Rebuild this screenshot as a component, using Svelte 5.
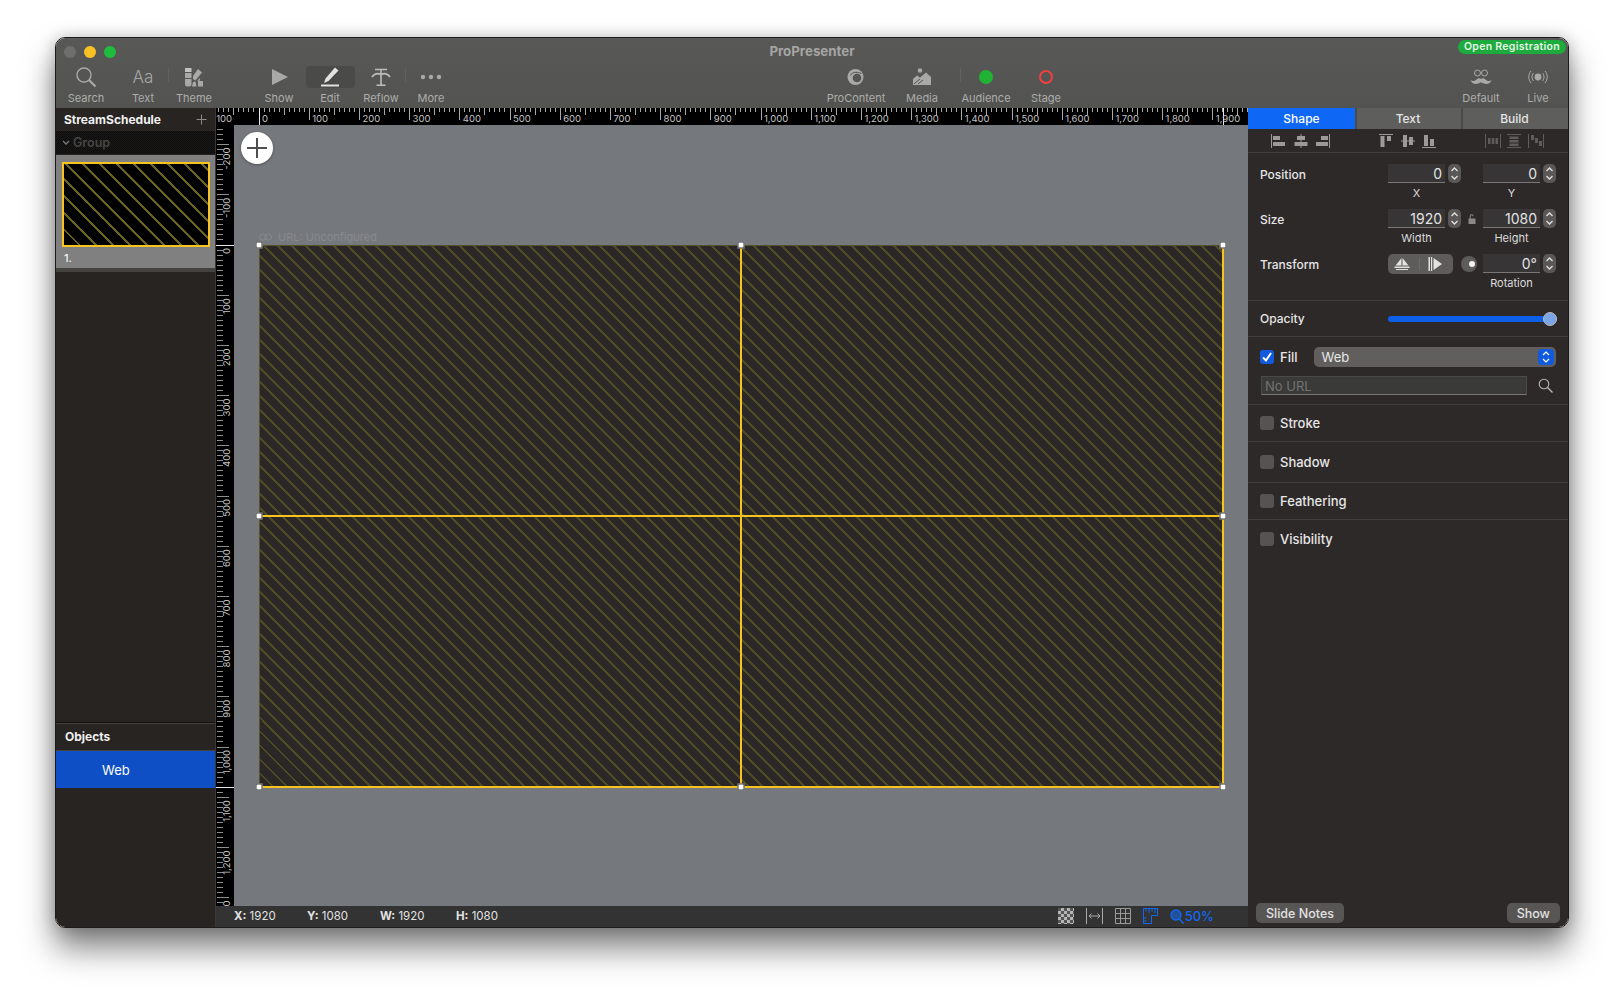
<script>
	// toolbar items, `ml` is the extra room before an item
	const toolsLeft = [
		{ id: 'search', label: 'Search' },
		{ id: 'aa', label: 'Text', ml: 7 },
		{ id: 'theme', label: 'Theme', ml: 1, sep: true },
		{ id: 'show', label: 'Show', ml: 35 },
		{ id: 'edit', label: 'Edit', ml: 1, active: true },
		{ id: 'reflow', label: 'Reflow', ml: 1 },
		{ id: 'more', label: 'More', sep: true }
	];
	const toolsMid = [
		{ id: 'procontent', label: 'ProContent' },
		{ id: 'media', label: 'Media', ml: 16 },
		{ id: 'audience', label: 'Audience', ml: 14, sep: true },
		{ id: 'stage', label: 'Stage', ml: 10 }
	];
	const toolsRight = [
		{ id: 'default', label: 'Default' },
		{ id: 'live', label: 'Live', ml: 7 }
	];

	const SCALE = 0.502;
	const TOP_ZERO = 43;
	const LEFT_ZERO = 120;

	function range(from, to, step) {
		const out = [];
		for (let v = from; v <= to; v += step) out.push(v);
		return out;
	}

	const topTicks = range(-100, 2000, 10);
	const leftTicks = range(-240, 1310, 10);
	const fmt = (v) => v.toLocaleString('en-US');
	// the last label of the side ruler wraps round to 0 in the app
	const fmtLeft = (v) => (v === 1300 ? '0' : fmt(v));
	const tickLen = (v) => (v % 100 === 0 ? 12 : v % 50 === 0 ? 7 : 4);

	const alignA = ['left', 'center', 'right'];
	const alignB = ['top', 'middle', 'bottom'];
	const alignC = ['dist-h', 'dist-v', 'dist-s'];

	const toggles = [
		{ label: 'Stroke' },
		{ label: 'Shadow', tall: true },
		{ label: 'Feathering' },
		{ label: 'Visibility', last: true }
	];
</script>

{#snippet tool(t)}
	<div class="tool" class:sep={t.sep} style:margin-left={t.ml ? t.ml + 'px' : null}>
		<div class="tool-icon" class:active={t.active}>
			{#if t.id === 'search'}
				<svg width="22" height="22" viewBox="0 0 22 22" fill="none" stroke="currentColor">
					<circle cx="9" cy="9" r="7" stroke-width="1.4" />
					<path d="M14 14l6.5 6.5" stroke-width="2.2" />
				</svg>
			{:else if t.id === 'aa'}
				<span class="aa">Aa</span>
			{:else if t.id === 'theme'}
				<svg width="20" height="20" viewBox="0 0 20 20" fill="currentColor">
					<rect x="1" y="1" width="6.500" height="4" fill="#c2c2c0" />
					<rect x="1" y="6" width="6.500" height="5" />
					<path d="M1 12h6.500v5a2.500 2.500 0 0 1-2.500 2.500H3.500A2.500 2.500 0 0 1 1 17zM14 2l4 3.500-6.500 8-2.500-1.500V9zM13 14l3-3v2.500zM14 14h5v5.500h-5zM9 15l2.500-0.500 1 5H8z" />
				</svg>
			{:else if t.id === 'show'}
				<svg width="17" height="16" viewBox="0 0 17 16" fill="currentColor"><path d="M1 0l16 8-16 8z" /></svg>
			{:else if t.id === 'edit'}
				<svg width="20" height="20" viewBox="0 0 20 20" fill="#e2e2e0">
					<path d="M15 0.500l3.500 3L8.500 14 4 16l1.500-4.500zM1 17.500h18V19.500H1z" />
				</svg>
			{:else if t.id === 'reflow'}
				<svg width="20" height="20" viewBox="0 0 20 20" fill="none" stroke="#bcbcba" stroke-width="1.600">
					<path d="M4 2.500h12M10 2.500V18M5.500 18.200h9M1 10c2.500-3.500 6-4 9-2.500 3-1.500 6.500-1 9 2.500" />
				</svg>
			{:else if t.id === 'more'}
				<svg width="22" height="6" viewBox="0 0 22 6" fill="currentColor">
					<circle cx="3" cy="3" r="2.200" /><circle cx="11" cy="3" r="2.200" /><circle cx="19" cy="3" r="2.200" />
				</svg>
			{:else if t.id === 'procontent'}
				<svg width="18" height="18" viewBox="0 0 18 18" fill="currentColor">
					<circle cx="8.500" cy="9" r="8" />
					<circle cx="10" cy="10" r="4.300" fill="#545452" />
					<path d="M3.500 7.500C5 4 9 3.500 14.500 5.500" fill="none" stroke="#545452" stroke-width="1" />
				</svg>
			{:else if t.id === 'media'}
				<svg width="20" height="18" viewBox="0 0 20 18" fill="currentColor">
					<circle cx="8" cy="2.500" r="2.200" />
					<path d="M1 11l4-3.500 3 2 6-5 5 4.500V17H1z" />
					<path d="M2 16l6-5M6 16l5-4" fill="none" stroke="#545452" stroke-width="1" />
				</svg>
			{:else if t.id === 'audience'}
				<svg width="16" height="16" viewBox="0 0 16 16"><circle cx="8" cy="8" r="7" fill="#1fb233" /></svg>
			{:else if t.id === 'stage'}
				<svg width="16" height="16" viewBox="0 0 16 16"><circle cx="8" cy="8" r="6" fill="none" stroke="#f23f3f" stroke-width="2" /></svg>
			{:else if t.id === 'default'}
				<svg width="22" height="16" viewBox="0 0 22 16" fill="none" stroke="currentColor">
					<circle cx="7.500" cy="4" r="3" stroke-width="1" /><circle cx="14.500" cy="4" r="3" stroke-width="1" />
					<path d="M0.500 11c2 2 4 1 6-0.500 2-1.500 3-1.500 4.500-0.500 1.500-1 2.500-1 4.500 0.500s4 2.500 6 0.500c-1 4-5 4.500-7.500 3.500-1.500-0.500-2.500-1-3-1s-1.500 0.500-3 1c-2.500 1-6.500 0.500-7.500-3.500z" fill="currentColor" stroke="none" />
				</svg>
			{:else if t.id === 'live'}
				<svg width="20" height="14" viewBox="0 0 20 14" fill="none" stroke="currentColor" stroke-width="1">
					<circle cx="10" cy="7" r="3.400" fill="currentColor" stroke="none" />
					<path d="M5.500 3c-2 2.500-2 5.500 0 8M14.500 3c2 2.500 2 5.500 0 8M3 1c-3 3.500-3 8.500 0 12M17 1c3 3.500 3 8.500 0 12" />
				</svg>
			{/if}
		</div>
		<span class="tool-label">{t.label}</span>
	</div>
{/snippet}

{#snippet stepper()}
	<div class="stepper">
		<svg width="9" height="19" viewBox="0 0 9 19" fill="none" stroke="#e0e0e0" stroke-width="1.300">
			<path d="M1.500 7l3-3 3 3M1.500 12l3 3 3-3" />
		</svg>
	</div>
{/snippet}

{#snippet alignIcon(kind)}
	<svg width="16" height="16" viewBox="0 0 16 16" fill="currentColor">
		{#if kind === 'left'}
			<path d="M0 1h1v14H0zM2 3h7v4H2zM2 9h12v4H2z" />
		{:else if kind === 'center'}
			<path d="M7.500 1h1v14h-1zM4 3h8v4H4zM1.500 9h13v4h-13z" />
		{:else if kind === 'right'}
			<path d="M15 1h1v14h-1zM7 3h7v4H7zM2 9h12v4H2z" />
		{:else if kind === 'top'}
			<path d="M1 1h14v1H1zM2.500 3h4v11h-4zM9 3h4v5H9z" />
		{:else if kind === 'middle'}
			<path d="M1 7.500h14v1H1zM3 2h4v12H3zM9 4h4v8H9z" />
		{:else if kind === 'bottom'}
			<path d="M1 14h14v1H1zM3 2h4v11H3zM9 6h4v7H9z" />
		{:else if kind === 'dist-h'}
			<path d="M0 1h1v14H0zM15 1h1v14h-1zM3 5h2.500v6H3zM6.800 5h2.500v6H6.800zM10.500 5H13v6h-2.500z" />
		{:else if kind === 'dist-v'}
			<path d="M1 1h14v1H1zM1 14h14v1H1zM3.500 3.500h9V6h-9zM3.500 7h9v2.500h-9zM3.500 10.500h9V13h-9z" />
		{:else}
			<path d="M0 1h1v14H0zM15 1h1v14h-1zM3 2h3v5H3zM7 5h3v5H7zM11 8h3v5h-3z" />
		{/if}
	</svg>
{/snippet}

<div class="page">
	<div class="window">
		<header class="toolbar">
			<div class="titlebar">
				<span class="light gray"></span>
				<span class="light yellow"></span>
				<span class="light green"></span>
				<span class="title">ProPresenter</span>
				<span class="badge">Open Registration</span>
			</div>
			<div class="tools">
				<div class="tool-group left">
					{#each toolsLeft as t}{@render tool(t)}{/each}
				</div>
				<div class="tool-group mid">
					{#each toolsMid as t}{@render tool(t)}{/each}
				</div>
				<div class="tool-group right">
					{#each toolsRight as t}{@render tool(t)}{/each}
				</div>
			</div>
		</header>

		<div class="main">
			<aside class="sidebar">
				<div class="side-head">
					<span>StreamSchedule</span>
					<svg width="11" height="11" viewBox="0 0 11 11" stroke="#8c8a88" stroke-width="1"><path d="M5.500 0.500v10M0.500 5.500h10" /></svg>
				</div>
				<div class="group-row">
					<svg width="8" height="6" viewBox="0 0 8 6" fill="none" stroke="#7d7b79" stroke-width="1.300"><path d="M1 1l3 3 3-3" /></svg>
					<span>Group</span>
				</div>
				<div class="slide">
					<div class="thumb"></div>
					<span class="slide-no">1.</span>
				</div>
				<div class="objects">
					<div class="objects-head">Objects</div>
					<div class="objects-row">Web</div>
				</div>
			</aside>

			<section class="center">
				<svg class="ruler-top" width="1032" height="17" viewBox="0 0 1032 17">
					<g stroke="#a9a9a9" stroke-width="1" shape-rendering="crispEdges">
						{#each topTicks as v}
							<line x1={TOP_ZERO + v * SCALE} x2={TOP_ZERO + v * SCALE} y1="0" y2={tickLen(v)} />
						{/each}
					</g>
					<g stroke="#e8e8e8" shape-rendering="crispEdges">
						<line x1={TOP_ZERO} x2={TOP_ZERO} y1="0" y2="17" />
						<line x1="1007" x2="1007" y1="0" y2="17" />
					</g>
					<g class="ruler-text">
						{#each topTicks.filter((v) => v % 100 === 0 && v < 2000) as v}
							<text x={TOP_ZERO + v * SCALE + 3} y="14">{fmt(v)}</text>
						{/each}
					</g>
				</svg>

				<div class="canvas-row">
					<svg class="ruler-left" width="18" height="782" viewBox="0 0 18 782">
						<g stroke="#8f8f8f" stroke-width="1" shape-rendering="crispEdges">
							{#each leftTicks as v}
								<line y1={LEFT_ZERO + v * SCALE} y2={LEFT_ZERO + v * SCALE} x1="1" x2={v % 100 === 0 ? 13 : 7} />
							{/each}
						</g>
						<g stroke="#e8e8e8" shape-rendering="crispEdges">
							<line y1={LEFT_ZERO} y2={LEFT_ZERO} x1="0" x2="18" />
							<line y1="662" y2="662" x1="0" x2="18" />
						</g>
						<g class="ruler-text">
							{#each leftTicks.filter((v) => v % 100 === 0) as v}
								<text
									text-anchor="end"
									transform="translate(14 {LEFT_ZERO + v * SCALE + 3}) rotate(-90)"
								>{fmtLeft(v)}</text>
							{/each}
						</g>
					</svg>

					<div class="canvas">
						<button class="add" aria-label="Add">
							<svg width="22" height="22" viewBox="0 0 22 22" stroke="#4f4f4f" stroke-width="2"><path d="M11 1v20M1 11h20" /></svg>
						</button>
						<div class="stage-label">
							<svg width="13" height="8" viewBox="0 0 13 8" fill="none" stroke="#878a8e" stroke-width="1"><rect x="0.500" y="1" width="7" height="6" rx="3" /><rect x="5.500" y="1" width="7" height="6" rx="3" /></svg>
							<span>URL: Unconfigured</span>
						</div>
						<div class="stage">
							<div class="cell c1"></div>
							<div class="cell c2"></div>
							<div class="cell c3"></div>
							<div class="cell c4"></div>
							{#each ['tl', 'tm', 'tr', 'ml', 'mr', 'bl', 'bm', 'br'] as h}
								<span class="handle {h}"></span>
							{/each}
						</div>
					</div>
				</div>

				<footer class="status">
					<div class="coords">
						<span><b>X:</b> 1920</span>
						<span><b>Y:</b> 1080</span>
						<span><b>W:</b> 1920</span>
						<span><b>H:</b> 1080</span>
					</div>
					<div class="status-icons">
						<div class="checker"></div>
						<svg width="17" height="16" viewBox="0 0 17 16" fill="none" stroke="#aaa" stroke-width="1">
							<path d="M0.500 0v16M16.500 0v16M3 8h11M5.500 5.500L3 8l2.500 2.500M11.500 5.500L14 8l-2.500 2.500" />
						</svg>
						<svg width="16" height="16" viewBox="0 0 16 16" fill="none" stroke="#9a9a9a" stroke-width="1">
							<path d="M0.500 0.500h15v15h-15zM5.500 0.500v15M10.500 0.500v15M0.500 5.500h15M0.500 10.500h15" />
						</svg>
						<svg width="15" height="16" viewBox="0 0 15 16" fill="none" stroke="#1468f0" stroke-width="1">
							<path d="M0.500 0.500h14v7h-6v8h-8zM3 0.500v3M6 0.500v4.500M9 0.500v3M12 0.500v4.500M0.500 10h3M0.500 13h3" />
						</svg>
						<div class="zoom">
							<svg width="14" height="15" viewBox="0 0 14 15" fill="none" stroke="#1468f0">
								<circle cx="6" cy="6" r="5" fill="#1468f0" fill-opacity="0.55" stroke-width="1.300" />
								<path d="M9.500 10l4 4.500" stroke-width="1.500" />
							</svg>
							<span>50%</span>
						</div>
					</div>
				</footer>
			</section>

			<aside class="inspector">
				<div class="tabs">
					<div class="tab on">Shape</div>
					<div class="tab">Text</div>
					<div class="tab">Build</div>
				</div>
				<div class="aligns">
					<div class="align-group">{#each alignA as k}{@render alignIcon(k)}{/each}</div>
					<div class="align-group">{#each alignB as k}{@render alignIcon(k)}{/each}</div>
					<div class="align-group dim">{#each alignC as k}{@render alignIcon(k)}{/each}</div>
				</div>

				<div class="section xf">
					<div class="xf-row">
						<span class="xf-label">Position</span>
						<div class="pair"><div class="field">0</div>{@render stepper()}</div>
						<span></span>
						<div class="pair"><div class="field">0</div>{@render stepper()}</div>
						<span></span>
						<span class="cap">X</span>
						<span></span>
						<span class="cap">Y</span>
					</div>
					<div class="xf-row">
						<span class="xf-label">Size</span>
						<div class="pair"><div class="field">1920</div>{@render stepper()}</div>
						<div class="lock">
							<svg width="8" height="10" viewBox="0 0 8 10" fill="#8b8987"><path d="M0.500 4.500h7V10h-7zM1.700 4.500V2.500a2 2 0 0 1 4-0.300h-1a1 1 0 0 0-2 0.300v2z" /></svg>
						</div>
						<div class="pair"><div class="field">1080</div>{@render stepper()}</div>
						<span></span>
						<span class="cap">Width</span>
						<span></span>
						<span class="cap">Height</span>
					</div>
					<div class="xf-row">
						<span class="xf-label">Transform</span>
						<div class="seg">
							<svg width="16" height="14" viewBox="0 0 16 14" fill="#e2e2e0"><path d="M7.500 1v7.500H1.500zM8.500 1l6 7.500h-6zM0.500 9.500h15V11H0.500zM2 12h12v1H2z" /></svg>
							<i></i>
							<svg width="14" height="16" viewBox="0 0 14 16" fill="#e2e2e0"><path d="M5.500 2l8.500 6-8.500 6zM0.500 1H2v14H0.500zM3 1h1.200v14H3z" /></svg>
						</div>
						<div class="knob"></div>
						<div class="pair"><div class="field">0°</div>{@render stepper()}</div>
						<span></span>
						<span></span>
						<span></span>
						<span class="cap">Rotation</span>
					</div>
				</div>

				<div class="section opacity">
					<span class="opacity-label">Opacity</span>
					<div class="slider"><span class="slider-knob"></span></div>
				</div>

				<div class="section fill">
					<div class="fill-row">
						<span class="check on">
							<svg width="12" height="12" viewBox="0 0 12 12" fill="none" stroke="#fff" stroke-width="2"><path d="M2 6.500l3 3 5-7.500" /></svg>
						</span>
						<span class="toggle-label">Fill</span>
						<div class="select">
							<span>Web</span>
							<span class="select-arrows">
								<svg width="8" height="14" viewBox="0 0 8 14" fill="none" stroke="#fff" stroke-width="1.200"><path d="M1 5l3-3 3 3M1 9l3 3 3-3" /></svg>
							</span>
						</div>
					</div>
					<div class="url-row">
						<div class="url">No URL</div>
						<svg width="15" height="15" viewBox="0 0 15 15" fill="none" stroke="#b5b5b3" stroke-width="1.100">
							<circle cx="6" cy="6" r="4.800" /><path d="M9.500 9.500l5 5" stroke-width="1.400" />
						</svg>
					</div>
				</div>

				{#each toggles as t}
					<div class="section toggle" class:tall={t.tall} class:last={t.last}>
						<span class="check"></span>
						<span class="toggle-label">{t.label}</span>
					</div>
				{/each}

				<div class="insp-foot">
					<button class="foot-btn">Slide Notes</button>
					<button class="foot-btn">Show</button>
				</div>
			</aside>
		</div>
	</div>
</div>

<style>
	:global(body) {
		margin: 0;
		background: #fff;
	}

	.page {
		width: 1624px;
		height: 1002px;
		padding: 37px 55px 0;
		box-sizing: border-box;
		overflow: hidden;
		font-family: Inter, 'Liberation Sans', sans-serif;
		color: #e4e4e4;
		background: #fff;
	}

	.window {
		width: 1514px;
		height: 891px;
		box-sizing: border-box;
		display: flex;
		flex-direction: column;
		border: 1px solid #1c1c1c;
		border-radius: 10px;
		overflow: hidden;
		box-shadow: 0 20px 32px rgba(0, 0, 0, 0.5), 0 0 16px rgba(0, 0, 0, 0.22);
	}

	/* toolbar */
	.toolbar {
		height: 70px;
		flex: none;
		background: linear-gradient(#585856, #535351);
		color: #a9a9a7;
	}

	.titlebar {
		position: relative;
		height: 26px;
		display: flex;
		align-items: center;
		gap: 8px;
		padding: 2px 0 0 8px;
		box-sizing: border-box;
	}

	.light {
		width: 12px;
		height: 12px;
		border-radius: 50%;
	}
	.light.gray { background: #6e6e6c; }
	.light.yellow { background: #f8c224; }
	.light.green { background: #1fbb3c; }

	.title {
		position: absolute;
		left: 0;
		right: 0;
		top: 5px;
		text-align: center;
		font-size: 13.3px;
		font-weight: 700;
		color: #a5a5a3;
		pointer-events: none;
	}

	.badge {
		position: absolute;
		right: 2px;
		top: 2px;
		height: 14px;
		line-height: 14px;
		padding: 0 6px;
		border-radius: 7px;
		background: #1dab3e;
		color: #e6f5e8;
		font-size: 10.5px;
		font-weight: 600;
		letter-spacing: 0.3px;
	}

	.tools {
		height: 44px;
		display: flex;
		padding-left: 5px;
	}

	.tool-group {
		display: flex;
	}
	.tool-group.mid { margin-left: 375px; }
	.tool-group.right { margin-left: 385px; }

	.tool {
		position: relative;
		width: 50px;
		display: flex;
		flex-direction: column;
		align-items: center;
		justify-content: flex-start;
	}

	.tool.sep::before {
		content: '';
		position: absolute;
		left: -1px;
		top: 4px;
		height: 14px;
		width: 1px;
		background: #626260;
	}

	.tool-icon {
		width: 49px;
		height: 22px;
		margin-top: 2px;
		display: flex;
		align-items: center;
		justify-content: center;
		border-radius: 4px;
	}
	.tool-icon.active { background: #4a4a48; }

	.aa {
		font-size: 17px;
		font-weight: 300;
		color: #a9a9a7;
	}

	.tool-label {
		margin-top: 3px;
		font-size: 11px;
		line-height: 14px;
		white-space: nowrap;
		color: #adadab;
	}

	.main {
		flex: 1;
		min-height: 0;
		display: flex;
	}

	/* left column */
	.sidebar {
		width: 160px;
		flex: none;
		display: flex;
		flex-direction: column;
		background: #272422;
		border-right: 1px solid #3a3836;
		box-sizing: border-box;
	}

	.side-head {
		height: 23px;
		flex: none;
		display: flex;
		align-items: center;
		justify-content: space-between;
		padding: 0 8px 0 8px;
		font-size: 12px;
		font-weight: 700;
		color: #f0f0f0;
	}

	.group-row {
		height: 23px;
		flex: none;
		display: flex;
		align-items: center;
		gap: 3px;
		padding-left: 6px;
		background: repeating-conic-gradient(#0c0c0c 0 25%, #1a1918 0 50%) 0 0 / 2px 2px;
		font-size: 12.5px;
		font-weight: 600;
		color: #484644;
	}

	.slide {
		margin-top: 1px;
		height: 117px;
		flex: none;
		padding: 7px 6px 0;
		box-sizing: border-box;
		background: #808080;
		border-bottom: 4px solid #45433f;
	}

	.thumb {
		width: 148px;
		height: 85px;
		box-sizing: border-box;
		border: 2px solid #f7c31f;
		background: repeating-linear-gradient(45deg, #000 0 9.9px, #6a6320 9.9px 12.02px);
	}

	.slide-no {
		display: block;
		margin: 4px 0 0 2px;
		font-size: 11px;
		font-weight: 500;
		color: #f2f2f2;
	}

	.objects {
		margin-top: auto;
		height: 204px;
		flex: none;
		border-top: 1px solid #121110;
		box-shadow: inset 0 1px 0 #45433f;
	}

	.objects-head {
		height: 27px;
		line-height: 27px;
		padding-left: 9px;
		font-size: 12px;
		font-weight: 700;
		color: #f0f0f0;
		border-bottom: 1px solid #45433f;
	}

	.objects-row {
		height: 37px;
		line-height: 39px;
		padding-left: 46px;
		background: #0f4fc6;
		font-size: 13px;
		color: #fff;
	}

	/* centre column */
	.center {
		flex: 1;
		min-width: 0;
		display: flex;
		flex-direction: column;
	}

	.ruler-top {
		display: block;
		flex: none;
		background: #000;
	}

	.ruler-text {
		font-size: 9.5px;
		fill: #c4c4c4;
	}

	.canvas-row {
		flex: 1;
		min-height: 0;
		display: flex;
	}

	.ruler-left {
		display: block;
		flex: none;
		background: #000;
	}

	.canvas {
		position: relative;
		flex: 1;
		padding: 104px 0 0 25px;
		background: #75787d;
		overflow: hidden;
	}

	.add {
		position: absolute;
		left: 7px;
		top: 7px;
		width: 32px;
		height: 32px;
		padding: 0;
		border: 0;
		border-radius: 50%;
		background: #fff;
		display: flex;
		align-items: center;
		justify-content: center;
		box-shadow: 0 1px 3px rgba(0, 0, 0, 0.3);
	}

	.stage-label {
		height: 16px;
		display: flex;
		align-items: center;
		gap: 6px;
		font-size: 11px;
		color: #878a8e;
	}

	.stage {
		position: relative;
		width: 965px;
		height: 543px;
		display: grid;
		grid-template-columns: 482px 1fr;
		grid-template-rows: 271px 1fr;
		box-sizing: border-box;
		border-top: 1px solid #55522a;
		border-left: 1px solid #55522a;
		border-right: 2px solid #f7c31f;
		border-bottom: 2px solid #f7c31f;
		/* 14px across: pixel aligned so the stripes stay even */
		background: repeating-linear-gradient(45deg, #2c2727 0 7.78px, #4f4b24 7.78px 9.899px);
	}

	.cell.c1,
	.cell.c3 { border-right: 2px solid #f7c31f; }
	.cell.c1,
	.cell.c2 { border-bottom: 2px solid #f7c31f; }

	.handle {
		position: absolute;
		width: 5px;
		height: 5px;
		background: #fff;
		border: 1px solid #333;
		transform: translate(-50%, -50%);
	}
	.handle.tl, .handle.ml, .handle.bl { left: -1px; }
	.handle.tm, .handle.bm { left: 481px; }
	.handle.tr, .handle.mr, .handle.br { left: calc(100% + 1px); }
	.handle.tl, .handle.tm, .handle.tr { top: -1px; }
	.handle.ml, .handle.mr { top: 270px; }
	.handle.bl, .handle.bm, .handle.br { top: calc(100% + 1px); }

	.status {
		height: 21px;
		flex: none;
		display: flex;
		align-items: center;
		justify-content: space-between;
		padding: 0 34px 1px 18px;
		box-sizing: border-box;
		background: #333;
		font-size: 11.5px;
		color: #e2e2e2;
	}

	.coords {
		display: grid;
		grid-template-columns: 73px 73px 76px auto;
	}
	.coords b { font-weight: 700; }

	.status-icons {
		display: flex;
		align-items: center;
		gap: 12px;
	}

	.checker {
		width: 16px;
		height: 16px;
		background: repeating-conic-gradient(#b5b5b5 0 25%, #555 0 50%) 0 0 / 6px 6px;
	}

	.zoom {
		display: flex;
		align-items: center;
		gap: 1px;
		color: #1468f0;
		font-size: 13px;
		font-weight: 500;
	}

	/* inspector */
	.inspector {
		width: 320px;
		flex: none;
		display: flex;
		flex-direction: column;
		background: #2e2929;
		font-size: 12px;
	}

	.tabs {
		height: 21px;
		flex: none;
		display: grid;
		grid-template-columns: 107px 106px 1fr;
	}

	.tab {
		text-align: center;
		line-height: 21px;
		padding-right: 2px;
		background: #5e5e5c;
		border-left: 2px solid #4a4a48;
		font-weight: 500;
		color: #e4e4e4;
	}
	.tab.on {
		padding-right: 0;
		background: #0f67f5;
		border-left: 0;
		color: #fff;
	}

	.aligns {
		height: 23px;
		flex: none;
		display: flex;
		align-items: center;
		padding-left: 23px;
		gap: 47.5px;
		border-bottom: 1px solid #423d3d;
		color: #9c9a98;
	}

	.align-group {
		display: flex;
		gap: 5.7px;
	}
	.align-group.dim { color: #5f5c5a; }

	.section {
		flex: none;
		box-sizing: border-box;
		border-bottom: 1px solid #423d3d;
	}
	.section.last { border-bottom: 0; }

	.xf {
		height: 148px;
		padding: 11px 0 0 12px;
	}

	.xf-row {
		height: 45px;
		display: grid;
		grid-template-columns: 128px 73px 22px 73px;
		grid-template-rows: 19px 20px;
		align-items: center;
	}

	.xf-label {
		padding-top: 1px;
		font-size: 12px;
		font-weight: 500;
		color: #e6e6e6;
	}

	.opacity-label {
		font-size: 12px;
		font-weight: 500;
		color: #e6e6e6;
	}

	.pair {
		display: flex;
		align-items: center;
		gap: 3px;
	}

	.field {
		width: 57px;
		height: 19px;
		box-sizing: border-box;
		padding-right: 3px;
		text-align: right;
		line-height: 20px;
		font-size: 14px;
		background: #373535;
		border-bottom: 1px solid #7a7876;
		color: #e2e2e2;
	}

	.stepper {
		width: 13px;
		height: 19px;
		border-radius: 5px;
		background: #5a5856;
		display: flex;
		justify-content: center;
	}

	.cap {
		width: 57px;
		line-height: 20px;
		text-align: center;
		font-size: 11px;
		color: #dcdcdc;
	}

	.lock {
		display: flex;
		justify-content: center;
		padding-right: 1px;
	}

	.seg {
		width: 65px;
		height: 20px;
		border-radius: 5px;
		background: #5e5c5a;
		display: flex;
		align-items: center;
		justify-content: space-between;
		padding: 0 11px 0 6px;
		box-sizing: border-box;
	}
	.seg i {
		width: 1px;
		height: 12px;
		background: #6d6b69;
	}

	.knob {
		position: relative;
		width: 16px;
		height: 16px;
		border-radius: 50%;
		background: #5e5c5a;
	}
	.knob::after {
		content: '';
		position: absolute;
		right: 2px;
		top: 5px;
		width: 6px;
		height: 6px;
		border-radius: 50%;
		background: #f2f2f2;
	}

	.opacity {
		height: 36px;
		display: flex;
		align-items: center;
		justify-content: space-between;
		padding: 0 11px 0 12px;
	}

	.slider {
		position: relative;
		width: 169px;
		height: 6px;
		border-radius: 3px;
		background: #0c5fe6;
	}

	.slider-knob {
		position: absolute;
		right: 0;
		top: -4px;
		width: 14px;
		height: 14px;
		box-sizing: border-box;
		border-radius: 50%;
		background: #7ba4e6;
		border: 1px solid #bbb;
	}

	.fill {
		height: 68px;
		padding: 10px 12px 0;
	}

	.fill-row {
		display: flex;
		align-items: center;
		height: 20px;
	}

	.check {
		width: 14px;
		height: 14px;
		border-radius: 3px;
		background: #565453;
		display: flex;
		align-items: center;
		justify-content: center;
		flex: none;
	}
	.check.on { background: #1159dd; }

	.toggle-label {
		margin-left: 6px;
		font-size: 13px;
		font-weight: 500;
		color: #e6e6e6;
	}

	.select {
		margin-left: 16px;
		width: 243px;
		height: 20px;
		box-sizing: border-box;
		display: flex;
		align-items: center;
		justify-content: space-between;
		padding: 0 2px 0 8px;
		border-radius: 5px;
		background: #615f5d;
		font-size: 13px;
		color: #e8e8e8;
	}

	.select-arrows {
		width: 16px;
		height: 16px;
		border-radius: 4px;
		background: #1159dd;
		display: flex;
		align-items: center;
		justify-content: center;
	}

	.url-row {
		margin-top: 9px;
		display: flex;
		align-items: center;
		gap: 11px;
	}

	.url {
		width: 266px;
		height: 19px;
		margin-left: 1px;
		box-sizing: border-box;
		padding-left: 3px;
		line-height: 18px;
		background: #3a3a38;
		border: 1px solid #4b4a48;
		border-bottom-color: #777;
		font-size: 13px;
		color: #747270;
	}

	.toggle {
		height: 37px;
		display: flex;
		align-items: center;
		padding-left: 12px;
	}
	.toggle.tall { height: 41px; }

	.insp-foot {
		margin-top: auto;
		display: flex;
		justify-content: space-between;
		padding: 0 8px 4px;
	}

	.foot-btn {
		height: 20px;
		padding: 0 10px;
		border: 0;
		border-radius: 5px;
		background: #585654;
		font: 500 12.5px Inter, 'Liberation Sans', sans-serif;
		color: #e2e2e2;
	}
</style>
